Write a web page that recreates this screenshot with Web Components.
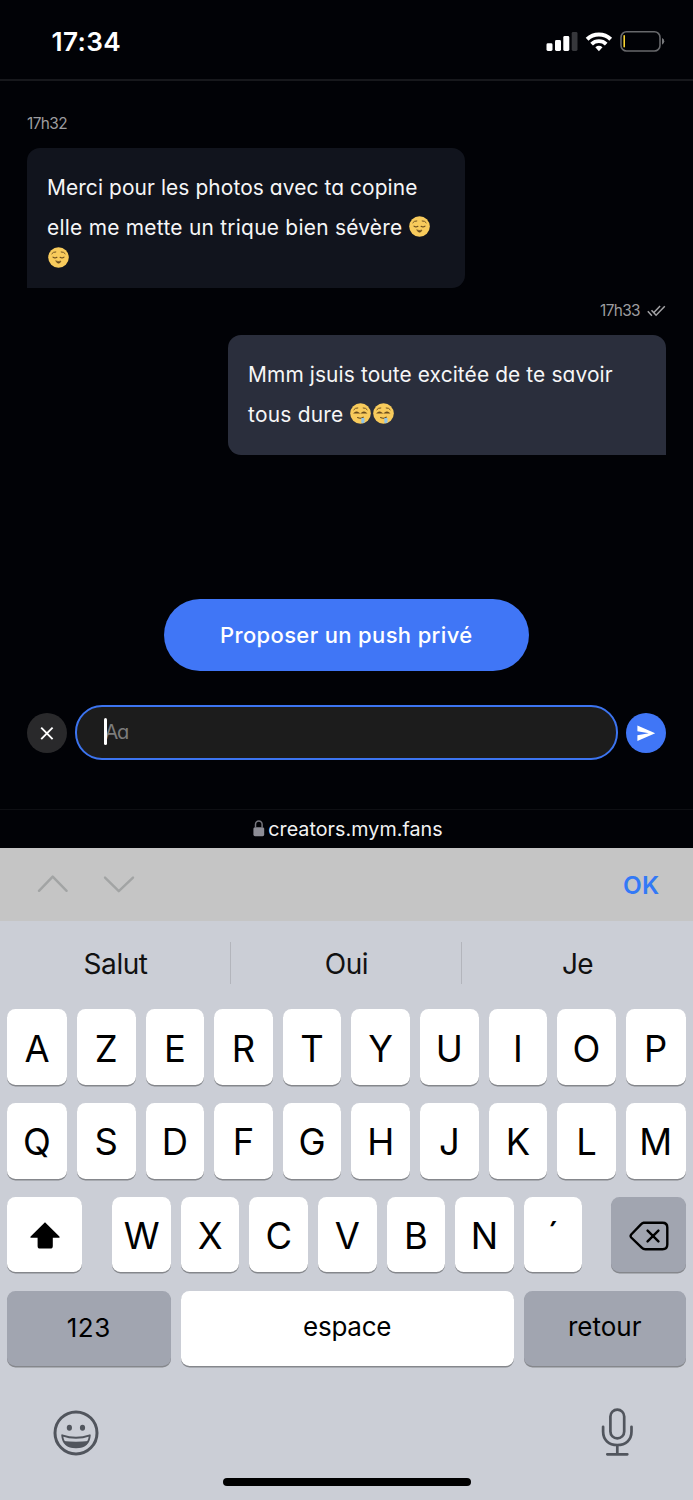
<!DOCTYPE html>
<html lang="fr">
<head>
<meta charset="utf-8">
<title>Messages</title>
<style>
html,body{margin:0;padding:0}
body{width:693px;height:1500px;overflow:hidden;background:#010206;font-family:Inter,"Liberation Sans",sans-serif}
</style>
</head>
<body>
<phone-screen></phone-screen>
<script>
const define = (name, html, init) => customElements.define(name, class extends HTMLElement {
  connectedCallback() {
    if (this.shadowRoot) return;
    const t = document.createElement('template');
    t.innerHTML = html;
    this.attachShadow({mode: 'open'}).append(t.content.cloneNode(true));
    if (init) init.call(this, this.shadowRoot);
  }
});

// One line of text, tracked so that it spans the width given in the "w" attribute.
define('text-line', `<style>:host{display:block;white-space:nowrap;flex:none}span{display:inline-block}</style><span><slot></slot></span>`, function (root) {
  const w = parseFloat(this.getAttribute('w'));
  if (!w) return;
  const span = root.querySelector('span');
  const text = root.querySelector('slot').assignedNodes({flatten: true}).map(n => n.textContent).join('');
  if (!text.length) return;
  const ls = (w - span.getBoundingClientRect().width) / text.length;
  this.style.letterSpacing = ls.toFixed(3) + 'px';
});

define('status-bar', `<style>
:host{display:flex;height:79px;border-bottom:2px solid #17181c;box-sizing:content-box;color:#fff;justify-content:space-between}
text-line{font-size:26.2px;font-weight:600;line-height:84px;margin-left:51.5px}
svg{display:block;margin:30px 28px 0 0}
</style>
<text-line w="69.5">17:34</text-line>
<svg width="120" height="24" viewBox="545 30 120 24">
<g fill="#fff"><rect x="546.5" y="43.3" width="6" height="7.7" rx="1.4"/><rect x="555" y="40" width="6" height="11" rx="1.4"/><rect x="563.3" y="36" width="6" height="15" rx="1.4"/><rect x="571.7" y="32" width="5.8" height="19" rx="1.4" fill="#36373b"/></g>
<g fill="none" stroke="#fff" stroke-width="4"><path d="M587.1 39.2a17 17 0 0 1 23.6 0"/><path d="M591.6 44.1a10.5 10.5 0 0 1 14.6 0" stroke-width="3.8"/></g>
<path d="M595.3 47.2q3.6-2.8 7.2 0l-3.6 4z" fill="#fff"/>
<rect x="621" y="31.8" width="39" height="19.2" rx="5.6" fill="none" stroke="#67686b" stroke-width="1.6"/>
<path d="M662 38q2.3 1 2.3 3.3T662 44.7z" fill="#77787b"/>
<rect x="623.4" y="35" width="1.6" height="12.6" rx=".8" fill="#f7d230"/>
</svg>`);

define('face-emoji', `<style>:host{display:inline-block;width:21px;height:21px;flex:none}svg{display:block}g.d{display:none}:host([drool]) g.d{display:inline}:host([drool]) g.r{display:none}</style>
<svg width="21" height="21" viewBox="0 0 21 21"><circle cx="10.5" cy="10.5" r="10.3" fill="#f8cb5c"/>
<g fill="none" stroke="#6b4d1d" stroke-width="1.15" stroke-linecap="round">
<path d="M3.8 6.7q1.3-2 4-1.8M13.2 4.9q2.7-.2 4 1.8" stroke-width=".95"/>
<g class="r"><path d="M5 10.1q1.8 1.5 3.9.2M12.1 10.3q2.1 1.3 3.9-.2"/><path d="M8 14q2.5 1.2 5 0-.7 2.2-2.5 2.2T8 14z" fill="#6b4d1d" stroke-width=".6"/></g>
<g class="d"><path d="M4.6 10q1.9-1.6 4 0zM11.9 10q2.1-1.6 4 0z"/><path d="M7.6 14.6q3 1.5 5.6-.4"/></g></g>
<g class="d"><path d="M11.3 15h3.2v4.2q-1.5 1.6-3.2 .6z" fill="#8fc4ea"/></g></svg>`);

define('msg-time', `<style>
:host{display:flex;height:20px;align-items:center;color:#9c9c9f;font-size:15.4px;line-height:20px;margin:0 27px}
:host([sent]){justify-content:flex-end}
svg{display:none;margin:1px 0 0 7px}:host([sent]) svg{display:block}
</style><text-line w="40"><slot></slot></text-line>
<svg width="19" height="13" viewBox="0 0 19 13" fill="none" stroke="#a3a3a6" stroke-width="1.5"><path d="M.8 6.3l4.1 4.4M4.5 5.2l4.6 5L17.8 1.3M6.9 7.4L13.1.9"/></svg>`);

define('chat-bubble', `<style>
:host{display:block;box-sizing:border-box;width:438px;padding:20px;background:#11141d;border-radius:13px 13px 13px 0;margin-left:27px;color:#f6f6f7;font-size:20.9px;line-height:40px;font-feature-settings:"cv11" 1}
:host([sent]){margin-left:228px;background:#2a2e3c;border-radius:13px 13px 0 13px}
</style><slot></slot>`);

define('push-button', `<style>
:host{display:block;width:365px;height:71.5px;border-radius:36px;background:#4076f6;color:#fff;margin:0 auto;font-size:22px;font-weight:500;line-height:73px;font-feature-settings:"cv11" 1}
text-line{margin-left:56px}
</style><text-line w="252.5"><slot></slot></text-line>`);

define('message-composer', `<style>
:host{display:grid;grid-template-columns:40px 543px 40px;column-gap:8px;align-items:center;margin:0 0 0 27px}
.b{width:40px;height:40px;border-radius:50%;background:#29292b;margin-top:1.2px}
.s{background:#4076f6}
svg{display:block}
.f{box-sizing:border-box;height:55px;border:2px solid #3c74f0;border-radius:27px;background:#1c1c1c;display:flex;position:relative;font-size:20px;line-height:50px;color:#7c7c7c;font-feature-settings:"cv11" 1}
text-line{margin-left:27.5px}
i{position:absolute;left:26.6px;top:11px;width:3.4px;height:27px;border-radius:1.7px;background:#fff}
</style>
<div class="b"><svg width="40" height="40" viewBox="0 0 40 40" stroke="#fff" stroke-width="1.9" fill="none"><path d="M14.2 14.7l11.4 11.4M25.6 14.7L14.2 26.1"/></svg></div>
<div class="f"><text-line w="23.5">Aa</text-line><i></i></div>
<div class="b s"><svg width="40" height="40" viewBox="0 0 40 40" fill="#fff"><path d="M11.4 12.4L29.2 20.2 11.4 28V22.2L22.8 20.2 11.4 18.3z"/></svg></div>`);

define('url-bar', `<style>
:host{display:flex;height:39px;border-top:1.5px solid #0e0f13;box-sizing:border-box;color:#f2f2f3;font-size:19.7px;line-height:38px;padding-left:253px}
svg{display:block;margin:10px 3.2px 0 0}
</style><svg width="12" height="17" viewBox="0 0 12 17"><rect x=".4" y="7.2" width="10.8" height="9" rx="1.6" fill="#8d8d96"/><path d="M2.5 7.5V4.6a3.3 3.5 0 0 1 6.6 0V7.5" fill="none" stroke="#77777e" stroke-width="1.5"/></svg><text-line w="174.5"><slot></slot></text-line>`);

define('form-toolbar', `<style>
:host{display:flex;height:73px;background:#c5c5c5;justify-content:space-between;color:#3379f6;font-size:24.4px;font-weight:600;line-height:74px}
svg{display:block;margin:26px 0 0 36px}
text-line{margin-right:33.5px}
</style><svg width="100" height="22" viewBox="0 0 100 22" fill="none" stroke="#a2a4a4" stroke-width="2.4" stroke-linecap="round" stroke-linejoin="round"><path d="M3 16.8L16.7 2.6 30.6 16.8M69 3.6L82.8 17.2 97 3.6"/></svg><text-line w="36.5"><slot></slot></text-line>`);

define('word-suggestions', `<style>
:host{display:grid;grid-template-columns:230.7px 231px 231.3px;height:42px;margin-top:21px;color:#111;font-size:28px;line-height:44px}
div{box-sizing:border-box;height:42px;display:flex;justify-content:center;border-right:1.5px solid #b3b5bc;padding-left:1.5px}
div:last-child{border:0;padding:0}
</style><div><text-line w="64">Salut</text-line></div><div><text-line w="43.5">Oui</text-line></div><div><text-line w="30.5">Je</text-line></div>`);

define('kb-key', `<style>
:host{display:flex;justify-content:center;align-items:center;box-sizing:border-box;height:75.6px;width:58.6px;flex:none;border-radius:8.5px;background:#fff;box-shadow:0 1.6px 0 #85878c;color:#000;font-size:36.4px;line-height:72px;white-space:nowrap;padding-top:3px}
:host([grey]){background:#a1a5b0}
:host([word]){font-size:26px;padding-top:0}
:host([up]){padding-bottom:2.4px}
</style><slot></slot>`);

define('key-row', `<style>:host{display:flex;gap:10px;padding:0 7px;height:75.6px;margin-bottom:18.2px}</style><slot></slot>`);

define('phone-keyboard', `<style>
:host{display:block;background:#cbced6;height:579px;overflow:hidden}
.keys{margin-top:25.3px}
svg{display:block}
.foot{display:flex;justify-content:space-between;align-items:flex-start;padding:0 59px 0 53px;margin-top:41.3px;height:70px}
.home{width:248px;height:8.5px;border-radius:5px;background:#000;margin:.3px auto 0}
</style>
<word-suggestions></word-suggestions>
<div class="keys"></div>
<div class="foot">
<svg width="46" height="46" viewBox="0 0 46 46" style="margin-top:2px"><g fill="none" stroke="#51555d"><circle cx="23" cy="22.9" r="21" stroke-width="3"/><path d="M9.2 25.3Q23 30.2 36.8 25.3 35.9 37.4 23 37.4T9.2 25.3z" stroke-width="1.9" stroke-linejoin="round"/></g><path d="M10.2 31Q23 32.6 35.8 31 33 37.6 23 37.6T10.2 31z" fill="#51555d"/><ellipse cx="16.4" cy="17.8" rx="2.6" ry="3" fill="#51555d"/><ellipse cx="29.5" cy="17.8" rx="2.6" ry="3" fill="#51555d"/></svg>
<svg width="34" height="49" viewBox="0 0 34 49" fill="none" stroke="#51555d" stroke-width="2.7" stroke-linecap="round"><rect x="10.4" y="1.6" width="13.8" height="28.8" rx="6.9"/><path d="M3.1 18.8V23.6C3.1 32 8.8 37 17.3 37S31.5 32 31.5 23.6V18.8M17.3 37V46M7.3 46.3H27.3"/></svg>
</div>
<div class="home"></div>`, function (root) {
  const key = (c, w) => `<kb-key${w ? ` style="width:${w}px"` : ''}>${c}</kb-key>`;
  const full = s => '<key-row>' + [...s].map((c, i) => key(c, i === 0 ? 60 : i === 9 ? 59.8 : 0)).join('') + '</key-row>';
  root.querySelector('.keys').innerHTML = full('AZERTYUIOP') + full('QSDFGHJKLM') +
  `<key-row><kb-key style="width:75px;margin-right:20.3px;padding-top:1px"><svg width="32" height="28" viewBox="0 0 32 28"><path d="M16 1.2L30.4 15.4Q31.4 16.8 29.8 16.8H23.8V25Q23.8 27.6 21.2 27.6H11Q8.6 27.6 8.6 25V16.8H2.2Q.6 16.8 1.6 15.4z" fill="#000"/></svg></kb-key>` +
  [...'WXCVBN´'].map(c => key(c)).join('') +
  `<kb-key grey style="width:75px;margin-left:18.2px;padding:2px 0 0 1px"><svg width="40" height="30" viewBox="0 0 40 30" fill="none" stroke="#000" stroke-width="2.4" stroke-linejoin="round" stroke-linecap="round"><path d="M14.5 1.8H33.5Q38.3 1.8 38.3 6.5V23.5Q38.3 28.2 33.5 28.2H16.4Q14.3 28.2 12.7 26.6L2.2 16.5Q1 15 2.2 13.5L12.2 3.2Q13.3 1.8 15 1.8zM18.6 9.6L29.4 20.4M29.4 9.6L18.6 20.4"/></svg></kb-key></key-row>` +
  `<key-row><kb-key grey word style="width:163.6px"><text-line w="44">123</text-line></kb-key><kb-key word up style="width:333px"><text-line w="88">espace</text-line></kb-key><kb-key grey word up style="width:162.2px"><text-line w="73.5">retour</text-line></kb-key></key-row>`;
});

define('phone-screen', `<style>
:host{display:flex;flex-direction:column;width:693px;height:1500px;background:#010206}
.chat{height:728px}
msg-time{margin-top:32.5px}
msg-time[sent]{margin-top:13px}
chat-bubble{margin-top:14px}
.l{display:flex;height:40px;align-items:center}
.e{display:flex;height:20.5px;align-items:center}
push-button{margin-top:144px}
message-composer{margin-top:34px}
</style>
<status-bar></status-bar>
<div class="chat">
<msg-time>17h32</msg-time>
<chat-bubble><text-line w="370.5">Merci pour les photos avec ta copine</text-line><div class="l"><text-line w="355.5">elle me mette un trique bien sévère</text-line><face-emoji style="margin:-3px 0 0 6.5px"></face-emoji></div><div class="e"><face-emoji style="margin-left:1px"></face-emoji></div></chat-bubble>
<msg-time sent>17h33</msg-time>
<chat-bubble sent><text-line w="364.7">Mmm jsuis toute excitée de te savoir</text-line><div class="l"><text-line w="95.5">tous dure</text-line><face-emoji drool style="margin:-3px 0 0 6.8px"></face-emoji><face-emoji drool style="margin:-3px 0 0 1.6px"></face-emoji></div></chat-bubble>
<push-button>Proposer un push privé</push-button>
<message-composer></message-composer>
</div>
<url-bar>creators.mym.fans</url-bar>
<form-toolbar>OK</form-toolbar>
<phone-keyboard></phone-keyboard>`);
</script>
</body>
</html>
